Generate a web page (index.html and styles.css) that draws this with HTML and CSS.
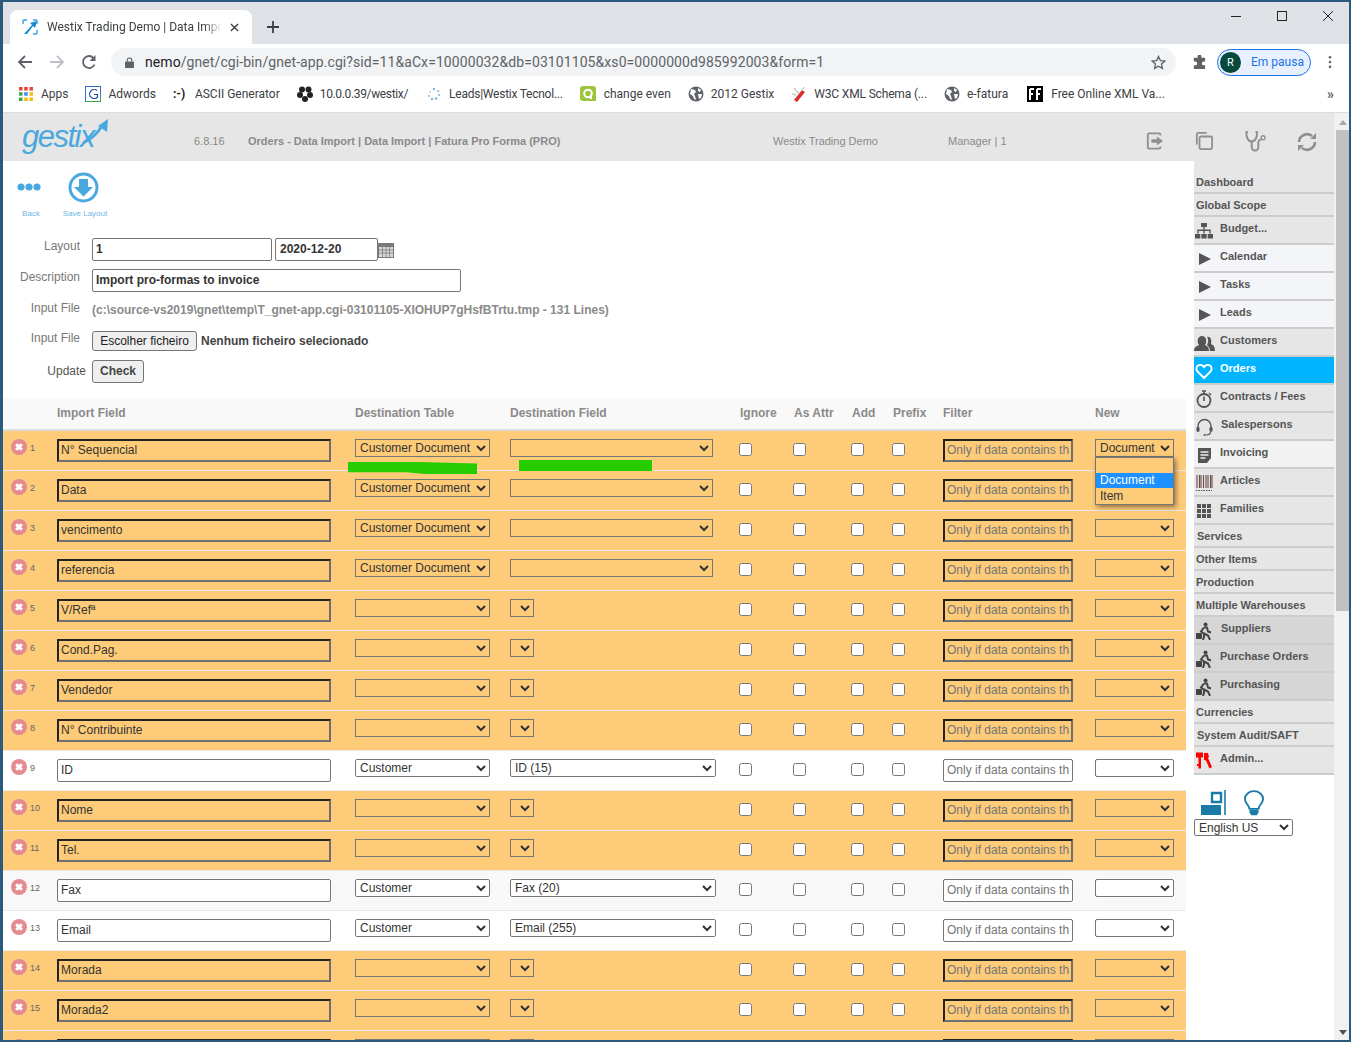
FILE: index.html
```html
<!DOCTYPE html>
<html lang="en">
<head>
<meta charset="utf-8">
<title>Westix Trading Demo | Data Import</title>
<link rel="stylesheet" href="styles.css">
</head>
<body>
<svg class="defs" width="0" height="0" aria-hidden="true">
  <defs>
    <symbol id="i-del" viewBox="0 0 16 16"><circle cx="8" cy="8" r="8" fill="#e58b90"/><path d="M5.200 5.200l5.600 5.600M10.800 5.200l-5.600 5.600" stroke="#fff" stroke-width="3"/></symbol>
    <symbol id="i-globe" viewBox="0 0 16 16"><circle cx="8" cy="8" r="7.500" fill="#5f6368"/><path d="M3 3l4 1 1 2-2 2 1 2 1 4-2-1-1-3-3-2zM10 2l3 2-1 2-2-1zM10 8l4 0-1 4-2 1z" fill="#fff"/></symbol>
    <symbol id="i-play" viewBox="0 0 18 18"><path d="M4 3l12 6-12 6z" fill="#555"/></symbol>
    <symbol id="i-walker" viewBox="0 0 18 18"><circle cx="10.500" cy="2.500" r="2" fill="#444"/><path d="M9 5.500l3 0 1 4 3 1M9 5.500l-3 4 3 2 0 3-1 3.500M9 11.500l4 2 2 4.500" stroke="#444" stroke-width="2" fill="none"/><rect x="1" y="11" width="6" height="6" rx="1" fill="#444"/></symbol>
  </defs>
</svg>
<div class="window">
  <div class="tabstrip">
    <div class="tab">
      <svg class="favicon" viewBox="0 0 16 16"><path d="M1 5V2a1 1 0 0 1 1-1h3M11 1h3a1 1 0 0 1 1 1v3M15 11v3a1 1 0 0 1-1 1h-3" stroke="#35a4e0" stroke-width="1.400" fill="none"/><path d="M2 15L10 6 8 4 15 2 13 9 11 7 5 15z" fill="#1a8ad6"/></svg>
      <span class="tab-title">Westix Trading Demo | Data Import</span>
      <svg class="tab-close" viewBox="0 0 10 10"><path d="M1 1l8 8M9 1L1 9" stroke="#3c4043" stroke-width="1.500"/></svg>
    </div>
    <svg class="newtab" viewBox="0 0 12 12"><path d="M6 0v12M0 6h12" stroke="#3c4043" stroke-width="1.800"/></svg>
    <div class="winctl">
      <svg viewBox="0 0 10 10" class="wc"><path d="M0 5.500h10" stroke="#222" stroke-width="1"/></svg>
      <svg viewBox="0 0 10 10" class="wc"><rect x=".5" y=".5" width="9" height="9" fill="none" stroke="#222"/></svg>
      <svg viewBox="0 0 10 10" class="wc"><path d="M0 0l10 10M10 0L0 10" stroke="#222" stroke-width="1"/></svg>
    </div>
  </div>
  <div class="toolbar">
    <svg class="nav" viewBox="0 0 16 16"><path d="M15 8H2M8 2L2 8l6 6" stroke="#5f6368" stroke-width="1.800" fill="none"/></svg>
    <svg class="nav" viewBox="0 0 16 16"><path d="M1 8h13M8 2l6 6-6 6" stroke="#bdc1c6" stroke-width="1.800" fill="none"/></svg>
    <svg class="nav" viewBox="0 0 16 16"><path d="M13.500 10.500A6 6 0 1 1 12.500 4" stroke="#5f6368" stroke-width="1.800" fill="none"/><path d="M14.500 1v6h-6z" fill="#5f6368"/></svg>
    <div class="omnibox">
      <svg class="lock" viewBox="0 0 10 12"><rect y="5" width="10" height="7" rx="1" fill="#5f6368"/><path d="M2.500 5V3.500a2.500 2.500 0 0 1 5 0V5" stroke="#5f6368" stroke-width="1.300" fill="none"/></svg>
      <span class="url"><b class="host">nemo</b>/gnet/cgi-bin/gnet-app.cgi?sid=11&amp;aCx=10000032&amp;db=03101105&amp;xs0=0000000d985992003&amp;form=1</span>
      <svg class="star" viewBox="0 0 16 16"><path d="M8 1.500l2 4.400 4.800.5-3.600 3.200 1 4.700L8 11.900l-4.200 2.400 1-4.700L1.200 6.400 6 5.900z" stroke="#5f6368" stroke-width="1.400" fill="none"/></svg>
    </div>
    <svg class="puzzle" viewBox="0 0 16 16"><path d="M6 1.500a2 2 0 0 1 4 0V3h4v4h-1.500a2 2 0 0 0 0 4H14v4H2v-4h1.500a2 2 0 0 0 0-4H2V3h4z" fill="#5f6368"/></svg>
    <div class="profile"><span class="avatar">R</span><span class="paused">Em pausa</span></div>
    <svg class="kebab" viewBox="0 0 4 16"><circle cx="2" cy="2.500" r="1.500" fill="#5f6368"/><circle cx="2" cy="8" r="1.500" fill="#5f6368"/><circle cx="2" cy="13.500" r="1.500" fill="#5f6368"/></svg>
  </div>
  <div class="bookmarks">
    <span class="bm"><svg class="bmi" viewBox="0 0 16 16"><g><rect x="1" y="1" width="3.500" height="3.500" fill="#ea4335"/><rect x="6.200" y="1" width="3.500" height="3.500" fill="#ea4335"/><rect x="11.500" y="1" width="3.500" height="3.500" fill="#ea4335"/><rect x="1" y="6.200" width="3.500" height="3.500" fill="#34a853"/><rect x="6.200" y="6.200" width="3.500" height="3.500" fill="#4285f4"/><rect x="11.500" y="6.200" width="3.500" height="3.500" fill="#fbbc04"/><rect x="1" y="11.500" width="3.500" height="3.500" fill="#34a853"/><rect x="6.200" y="11.500" width="3.500" height="3.500" fill="#fbbc04"/><rect x="11.500" y="11.500" width="3.500" height="3.500" fill="#fbbc04"/></g></svg>Apps</span>
    <span class="bm bm-ad"><svg class="bmi" viewBox="0 0 16 16"><rect x=".5" y=".5" width="15" height="15" fill="#fff" stroke="#2f6fbf"/><path d="M.5 15.500h15V8" stroke="#34a853" fill="none"/><path d="M12 4.500A4.500 4.500 0 1 0 12.500 11V8.500H9" stroke="#1a3fa8" stroke-width="1.200" fill="none"/></svg>Adwords</span>
    <span class="bm"><span class="smile">:-)</span>ASCII Generator</span>
    <span class="bm bm-t1"><svg class="bmi" viewBox="0 0 16 16"><g fill="#222"><circle cx="5" cy="3.500" r="3"/><circle cx="11.500" cy="3.500" r="3"/><circle cx="3" cy="9" r="3"/><circle cx="13" cy="9" r="3"/><circle cx="8" cy="13" r="3"/></g></svg>10.0.0.39/westix/</span>
    <span class="bm bm-t2"><svg class="bmi" viewBox="0 0 16 16"><g fill="#7fb4dc"><circle cx="8" cy="3" r="1.200"/><circle cx="12" cy="5" r="1"/><circle cx="13" cy="9" r="1"/><circle cx="10" cy="12.500" r="1.200"/><circle cx="6" cy="13" r="1.200"/><circle cx="3" cy="10" r="1"/><circle cx="4" cy="6" r=".8"/></g></svg>Leads|Westix Tecnol...</span>
    <span class="bm bm-ce"><svg class="bmi" viewBox="0 0 16 16"><path d="M3 0h10a3 3 0 0 1 3 3v12H3a3 3 0 0 1-3-3V3a3 3 0 0 1 3-3z" fill="#9dc53c"/><circle cx="8" cy="7.500" r="3.800" fill="none" stroke="#fff" stroke-width="2"/><path d="M11 8v5" stroke="#fff" stroke-width="2"/></svg>change even</span>
    <span class="bm"><svg class="bmi"><use href="#i-globe"/></svg>2012 Gestix</span>
    <span class="bm bm-t3"><svg class="bmi" viewBox="0 0 16 16"><path d="M3 14l8-10 3 2-8 10z" fill="#d92b2b"/><path d="M3 2l5 6M13 1l-2 4M1 8l4 1" stroke="#c8c8c8" stroke-width="1.400"/></svg>W3C XML Schema (...</span>
    <span class="bm"><svg class="bmi"><use href="#i-globe"/></svg>e-fatura</span>
    <span class="bm bm-ff"><svg class="bmi" viewBox="0 0 16 16"><rect width="16" height="16" fill="#000"/><path d="M3 3v11M3 3h4M3 8h3M10 3v11M10 3h4M10 8h3" stroke="#fff" stroke-width="2" fill="none"/></svg>Free Online XML Va...</span>
    <span class="bm-more">»</span>
  </div>
  <div class="page">
    <div class="app">
      <header class="appbar">
        <div class="logo">gestix<svg class="logo-arrow" viewBox="0 0 28 28"><path d="M1 25C8 22 15 16 20 8" stroke="#4aa8e0" stroke-width="2.600" fill="none"/><path d="M26 1l-1 13-9-6z" fill="#4aa8e0"/></svg></div>
        <span class="ver">6.8.16</span>
        <span class="crumb">Orders - Data Import | Data Import | Fatura Pro Forma (PRO)</span>
        <span class="company">Westix Trading Demo</span>
        <span class="user">Manager | 1</span>
        <div class="app-icons">
          <svg class="ai" viewBox="0 0 20 20"><path d="M16 4V3a1.500 1.500 0 0 0-1.500-1.500h-11A1.500 1.500 0 0 0 2 3v14a1.500 1.500 0 0 0 1.500 1.500h11A1.500 1.500 0 0 0 16 17v-1" stroke="#8f8f8f" stroke-width="2" fill="none"/><path d="M6 8h6V5l7 5-7 5v-3H6z" fill="#8f8f8f"/></svg>
          <svg class="ai ai-c" viewBox="0 0 20 20"><path d="M2 14V3a2 2 0 0 1 2-2h9" stroke="#8f8f8f" stroke-width="2" fill="none"/><rect x="5" y="5" width="14" height="14" rx="2" stroke="#8f8f8f" stroke-width="2" fill="none"/></svg>
          <svg class="ai ai-s" viewBox="0 0 22 22"><path d="M3 1H1.500C1 6 3 11 7 11s6-5 5.500-10H11M7 11v6a3.500 3.500 0 0 0 7 0v-5a3 3 0 0 1 3-3" stroke="#8f8f8f" stroke-width="2" fill="none"/><circle cx="19" cy="7" r="2" stroke="#8f8f8f" stroke-width="1.400" fill="none"/></svg>
          <svg class="ai ai-r" viewBox="0 0 20 20"><path d="M2 10a8 8 0 0 1 13-6M18 10a8 8 0 0 1-13 6" stroke="#8f8f8f" stroke-width="2.600" fill="none"/><path d="M13 7h6V1zM1 13h6l-6 6z" fill="#8f8f8f"/></svg>
        </div>
      </header>
      <div class="body">
        <main class="main">
          <div class="tools">
            <a class="tool tool-back"><svg class="tool-ic" viewBox="0 0 24 31"><circle cx="4" cy="15" r="3.600" fill="#4aa8e0"/><circle cx="12" cy="15" r="3.600" fill="#4aa8e0"/><circle cx="20" cy="15" r="3.600" fill="#4aa8e0"/></svg><span>Back</span></a>
            <a class="tool tool-save"><svg class="tool-ic" viewBox="0 0 31 31"><circle cx="15.500" cy="15.500" r="13.500" stroke="#4aa8e0" stroke-width="3" fill="none"/><path d="M11 7h9v8h5l-9.500 9.500L6 15h5z" fill="#4aa8e0"/></svg><span>Save Layout</span></a>
          </div>
          <form class="form">
            <div class="frow frow-1"><label class="flabel">Layout</label><input class="fin fin-code" value="1"><input class="fin fin-date" value="2020-12-20"><svg class="cal" viewBox="0 0 16 16"><rect x="0" y="1" width="16" height="15" fill="#7a7a7a"/><rect x="1" y="5" width="14" height="10" fill="#d8d8d8"/><path d="M1 8h14M1 11h14M4.500 5v10M8 5v10M11.500 5v10" stroke="#7a7a7a" stroke-width=".8"/></svg></div>
            <div class="frow frow-2"><label class="flabel">Description</label><input class="fin fin-desc" value="Import pro-formas to invoice"></div>
            <div class="frow frow-3"><label class="flabel">Input File</label><span class="path">(c:\source-vs2019\gnet\temp\T_gnet-app.cgi-03101105-XIOHUP7gHsfBTrtu.tmp - 131 Lines)</span></div>
            <div class="frow frow-4"><label class="flabel">Input File</label><button type="button" class="btn btn-file">Escolher ficheiro</button><span class="nofile">Nenhum ficheiro selecionado</span></div>
            <div class="frow frow-5"><label class="flabel flabel-wide">Update</label><button type="button" class="btn btn-check">Check</button></div>
          </form>
          <div class="table">
            <div class="thead">
              <span></span><span>Import Field</span><span>Destination Table</span><span>Destination Field</span><span class="th-c">Ignore</span><span class="th-c">As Attr</span><span class="th-c">Add</span><span class="th-c">Prefix</span><span>Filter</span><span>New</span>
            </div>
            <div class="green green-a"></div>
            <div class="green green-b"></div>

            <div class="row warn">
              <div class="idx"><svg class="del"><use href="#i-del"/></svg><span>1</span></div>
              <div><input class="in-field" value="N° Sequencial"></div>
              <div><select class="s-table"><option>Customer Document</option></select></div>
              <div><select class="s-field"><option></option></select></div>
              <div><input type="checkbox"></div><div><input type="checkbox"></div><div><input type="checkbox"></div><div><input type="checkbox"></div>
              <div><input class="in-filter" placeholder="Only if data contains the value"></div>
              <div class="newcell"><select class="s-new"><option>Document</option></select>
                <div class="popup"><div class="opt">&nbsp;</div><div class="opt opt-on">Document</div><div class="opt">Item</div></div>
              </div>
            </div>
            <div class="row warn">
              <div class="idx"><svg class="del"><use href="#i-del"/></svg><span>2</span></div>
              <div><input class="in-field" value="Data"></div>
              <div><select class="s-table"><option>Customer Document</option></select></div>
              <div><select class="s-field"><option></option></select></div>
              <div><input type="checkbox"></div><div><input type="checkbox"></div><div><input type="checkbox"></div><div><input type="checkbox"></div>
              <div><input class="in-filter" placeholder="Only if data contains the value"></div>
              <div><select class="s-new"><option></option></select></div>
            </div>
            <div class="row warn">
              <div class="idx"><svg class="del"><use href="#i-del"/></svg><span>3</span></div>
              <div><input class="in-field" value="vencimento"></div>
              <div><select class="s-table"><option>Customer Document</option></select></div>
              <div><select class="s-field"><option></option></select></div>
              <div><input type="checkbox"></div><div><input type="checkbox"></div><div><input type="checkbox"></div><div><input type="checkbox"></div>
              <div><input class="in-filter" placeholder="Only if data contains the value"></div>
              <div><select class="s-new"><option></option></select></div>
            </div>
            <div class="row warn">
              <div class="idx"><svg class="del"><use href="#i-del"/></svg><span>4</span></div>
              <div><input class="in-field" value="referencia"></div>
              <div><select class="s-table"><option>Customer Document</option></select></div>
              <div><select class="s-field"><option></option></select></div>
              <div><input type="checkbox"></div><div><input type="checkbox"></div><div><input type="checkbox"></div><div><input type="checkbox"></div>
              <div><input class="in-filter" placeholder="Only if data contains the value"></div>
              <div><select class="s-new"><option></option></select></div>
            </div>
            <div class="row warn">
              <div class="idx"><svg class="del"><use href="#i-del"/></svg><span>5</span></div>
              <div><input class="in-field" value="V/Refª"></div>
              <div><select class="s-table"><option></option></select></div>
              <div><select class="s-small"><option></option></select></div>
              <div><input type="checkbox"></div><div><input type="checkbox"></div><div><input type="checkbox"></div><div><input type="checkbox"></div>
              <div><input class="in-filter" placeholder="Only if data contains the value"></div>
              <div><select class="s-new"><option></option></select></div>
            </div>
            <div class="row warn">
              <div class="idx"><svg class="del"><use href="#i-del"/></svg><span>6</span></div>
              <div><input class="in-field" value="Cond.Pag."></div>
              <div><select class="s-table"><option></option></select></div>
              <div><select class="s-small"><option></option></select></div>
              <div><input type="checkbox"></div><div><input type="checkbox"></div><div><input type="checkbox"></div><div><input type="checkbox"></div>
              <div><input class="in-filter" placeholder="Only if data contains the value"></div>
              <div><select class="s-new"><option></option></select></div>
            </div>
            <div class="row warn">
              <div class="idx"><svg class="del"><use href="#i-del"/></svg><span>7</span></div>
              <div><input class="in-field" value="Vendedor"></div>
              <div><select class="s-table"><option></option></select></div>
              <div><select class="s-small"><option></option></select></div>
              <div><input type="checkbox"></div><div><input type="checkbox"></div><div><input type="checkbox"></div><div><input type="checkbox"></div>
              <div><input class="in-filter" placeholder="Only if data contains the value"></div>
              <div><select class="s-new"><option></option></select></div>
            </div>
            <div class="row warn">
              <div class="idx"><svg class="del"><use href="#i-del"/></svg><span>8</span></div>
              <div><input class="in-field" value="N° Contribuinte"></div>
              <div><select class="s-table"><option></option></select></div>
              <div><select class="s-small"><option></option></select></div>
              <div><input type="checkbox"></div><div><input type="checkbox"></div><div><input type="checkbox"></div><div><input type="checkbox"></div>
              <div><input class="in-filter" placeholder="Only if data contains the value"></div>
              <div><select class="s-new"><option></option></select></div>
            </div>
            <div class="row ok">
              <div class="idx"><svg class="del"><use href="#i-del"/></svg><span>9</span></div>
              <div><input class="in-field" value="ID"></div>
              <div><select class="s-table"><option>Customer</option></select></div>
              <div><select class="s-field"><option>ID (15)</option></select></div>
              <div><input type="checkbox"></div><div><input type="checkbox"></div><div><input type="checkbox"></div><div><input type="checkbox"></div>
              <div><input class="in-filter" placeholder="Only if data contains the value"></div>
              <div><select class="s-new"><option></option></select></div>
            </div>
            <div class="row warn">
              <div class="idx"><svg class="del"><use href="#i-del"/></svg><span>10</span></div>
              <div><input class="in-field" value="Nome"></div>
              <div><select class="s-table"><option></option></select></div>
              <div><select class="s-small"><option></option></select></div>
              <div><input type="checkbox"></div><div><input type="checkbox"></div><div><input type="checkbox"></div><div><input type="checkbox"></div>
              <div><input class="in-filter" placeholder="Only if data contains the value"></div>
              <div><select class="s-new"><option></option></select></div>
            </div>
            <div class="row warn">
              <div class="idx"><svg class="del"><use href="#i-del"/></svg><span>11</span></div>
              <div><input class="in-field" value="Tel."></div>
              <div><select class="s-table"><option></option></select></div>
              <div><select class="s-small"><option></option></select></div>
              <div><input type="checkbox"></div><div><input type="checkbox"></div><div><input type="checkbox"></div><div><input type="checkbox"></div>
              <div><input class="in-filter" placeholder="Only if data contains the value"></div>
              <div><select class="s-new"><option></option></select></div>
            </div>
            <div class="row ok ok-alt">
              <div class="idx"><svg class="del"><use href="#i-del"/></svg><span>12</span></div>
              <div><input class="in-field" value="Fax"></div>
              <div><select class="s-table"><option>Customer</option></select></div>
              <div><select class="s-field"><option>Fax (20)</option></select></div>
              <div><input type="checkbox"></div><div><input type="checkbox"></div><div><input type="checkbox"></div><div><input type="checkbox"></div>
              <div><input class="in-filter" placeholder="Only if data contains the value"></div>
              <div><select class="s-new"><option></option></select></div>
            </div>
            <div class="row ok">
              <div class="idx"><svg class="del"><use href="#i-del"/></svg><span>13</span></div>
              <div><input class="in-field" value="Email"></div>
              <div><select class="s-table"><option>Customer</option></select></div>
              <div><select class="s-field"><option>Email (255)</option></select></div>
              <div><input type="checkbox"></div><div><input type="checkbox"></div><div><input type="checkbox"></div><div><input type="checkbox"></div>
              <div><input class="in-filter" placeholder="Only if data contains the value"></div>
              <div><select class="s-new"><option></option></select></div>
            </div>
            <div class="row warn">
              <div class="idx"><svg class="del"><use href="#i-del"/></svg><span>14</span></div>
              <div><input class="in-field" value="Morada"></div>
              <div><select class="s-table"><option></option></select></div>
              <div><select class="s-small"><option></option></select></div>
              <div><input type="checkbox"></div><div><input type="checkbox"></div><div><input type="checkbox"></div><div><input type="checkbox"></div>
              <div><input class="in-filter" placeholder="Only if data contains the value"></div>
              <div><select class="s-new"><option></option></select></div>
            </div>
            <div class="row warn">
              <div class="idx"><svg class="del"><use href="#i-del"/></svg><span>15</span></div>
              <div><input class="in-field" value="Morada2"></div>
              <div><select class="s-table"><option></option></select></div>
              <div><select class="s-small"><option></option></select></div>
              <div><input type="checkbox"></div><div><input type="checkbox"></div><div><input type="checkbox"></div><div><input type="checkbox"></div>
              <div><input class="in-filter" placeholder="Only if data contains the value"></div>
              <div><select class="s-new"><option></option></select></div>
            </div>
            <div class="row warn">
              <div class="idx"><svg class="del"><use href="#i-del"/></svg></div>
              <div><input class="in-field" value=""></div>
              <div><select class="s-table"><option></option></select></div>
              <div><select class="s-small"><option></option></select></div>
              <div><input type="checkbox"></div><div><input type="checkbox"></div><div><input type="checkbox"></div><div><input type="checkbox"></div>
              <div><input class="in-filter"></div>
              <div><select class="s-new"><option></option></select></div>
            </div>
          </div>
        </main>
        <aside class="side">
          <nav class="menu">
            <a class="mi mi-first">Dashboard</a>
            <a class="mi">Global Scope</a>
            <a class="mi mi-ic"><svg class="mic" viewBox="0 0 18 18"><path d="M6 1h6v4H6zM8.300 5h1.400v3h-1.400zM2.300 7.500h13.400v4h-1.400V9H9.700v2.500H8.300V9H3.700v2.500H2.300zM0 12h5.300v4.500H0zM6.300 12h5.400v4.500H6.300zM12.700 12H18v4.500h-5.300z" fill="#555"/></svg>Budget...</a>
            <a class="mi mi-ic mi-light"><svg class="mic"><use href="#i-play"/></svg>Calendar</a>
            <a class="mi mi-ic mi-light"><svg class="mic"><use href="#i-play"/></svg>Tasks</a>
            <a class="mi mi-ic mi-light"><svg class="mic"><use href="#i-play"/></svg>Leads</a>
            <a class="mi mi-ic"><svg class="mic mic-w" viewBox="0 0 22 18"><path d="M1 17c0-4 3-5 5-6-2-2-2-9 3-9s5 7 3 9c2 1 4 2 4 6z" fill="#555"/><path d="M14 3c4-1 5 4 4 7 2 1 4 2 4 7h-5c0-3-2-5-3-6 1-2 2-5 0-8z" fill="#555"/></svg>Customers</a>
            <a class="mi mi-ic mi-on"><svg class="mic" viewBox="0 0 18 18"><path d="M9 16L2.500 9.500a4 4 0 0 1 0-5.500 4 4 0 0 1 5.500 0L9 5l1-1a4 4 0 0 1 5.500 0 4 4 0 0 1 0 5.500z" stroke="#fff" stroke-width="2" fill="none"/></svg>Orders</a>
            <a class="mi mi-ic"><svg class="mic" viewBox="0 0 18 18"><circle cx="9" cy="10.500" r="6.500" stroke="#555" stroke-width="1.800" fill="none"/><path d="M7 1h4M9 1v3M9 6.500v4.500" stroke="#555" stroke-width="1.600"/><path d="M14 3l2 2" stroke="#555" stroke-width="1.500"/></svg>Contracts / Fees</a>
            <a class="mi mi-ic mi-nudge"><svg class="mic" viewBox="0 0 18 18"><path d="M3 11V8a6.500 6.500 0 0 1 13 0v3" stroke="#555" stroke-width="1.400" fill="none"/><rect x="1.500" y="9" width="3" height="5" rx="1.400" fill="#555"/><rect x="14.500" y="9" width="3" height="5" rx="1.400" fill="#555"/><path d="M15.500 14c0 2-2 3-5 3" stroke="#555" stroke-width="1.200" fill="none"/><circle cx="9.500" cy="17" r="1" fill="#555"/></svg>Salespersons</a>
            <a class="mi mi-ic mi-soft"><svg class="mic" viewBox="0 0 18 18"><path d="M3 2h13v10l-4 5H3z" fill="#555"/><path d="M5.500 6h8M5.500 9h8M5.500 12h5" stroke="#eee" stroke-width="1.300"/></svg>Invoicing</a>
            <a class="mi mi-ic"><svg class="mic" viewBox="0 0 18 18"><path d="M2 1v13M4.500 1v13M6 1v13M8.500 1v13M11 1v13M13 1v13M15.500 1v13M17 1v13" stroke="#6b4a4a" stroke-width="1.100"/><path d="M1 16.500h16" stroke="#6b4a4a" stroke-width="1" stroke-dasharray="1.500 1"/></svg>Articles</a>
            <a class="mi mi-ic"><svg class="mic" viewBox="0 0 18 18"><path d="M2 2h4v4H2zM7 2h4v4H7zM12 2h4v4h-4zM2 7h4v4H2zM7 7h4v4H7zM12 7h4v4h-4zM2 12h4v4H2zM7 12h4v4H7zM12 12h4v4h-4z" fill="#555"/></svg>Families</a>
            <a class="mi mi-nudge">Services</a>
            <a class="mi">Other Items</a>
            <a class="mi">Production</a>
            <a class="mi">Multiple Warehouses</a>
            <a class="mi mi-ic mi-dark mi-nudge"><svg class="mic"><use href="#i-walker"/></svg>Suppliers</a>
            <a class="mi mi-ic mi-dark"><svg class="mic"><use href="#i-walker"/></svg>Purchase Orders</a>
            <a class="mi mi-ic mi-dark"><svg class="mic"><use href="#i-walker"/></svg>Purchasing</a>
            <a class="mi">Currencies</a>
            <a class="mi mi-nudge">System Audit/SAFT</a>
            <a class="mi mi-ic"><svg class="mic" viewBox="0 0 18 18"><path d="M1 .5h7v5H6v11H3.500V14H2v-2h1.500V5.500H1zM9 1h4l1 4-1 1 4 9-2.500 1.500-3.500-8-2-.5z" fill="#f00"/></svg>Admin...</a>
          </nav>
          <div class="side-ic">
            <svg class="si si-a" viewBox="0 0 25 25"><path d="M0 15h20v10H0z" fill="#1a7aa8"/><path d="M11 3h9v9h-9z" fill="none" stroke="#1a7aa8" stroke-width="2.400"/><path d="M24 0v25" stroke="#1a7aa8" stroke-width="1.600"/></svg>
            <svg class="si si-b" viewBox="0 0 22 27"><path d="M6 20c0-4-5-6-5-11a10 8.500 0 0 1 20 0c0 5-5 7-5 11z" fill="none" stroke="#1a7aa8" stroke-width="2"/><path d="M6 21h10v3l-2 3H8l-2-3z" fill="#1a7aa8"/></svg>
          </div>
          <select class="lang"><option>English US</option></select>
        </aside>
      </div>
    </div>
    <div class="scrollbar">
      <svg class="sb-a" viewBox="0 0 8 5"><path d="M4 0l4 5H0z" fill="#a8a8a8"/></svg>
      <div class="sb-thumb"></div>
      <svg class="sb-b" viewBox="0 0 8 5"><path d="M0 0h8L4 5z" fill="#505050"/></svg>
    </div>
  </div>
</div>
</body>
</html>
```

FILE: styles.css
```css
* { box-sizing: border-box; }
html, body { margin: 0; padding: 0; height: 100%; overflow: hidden; background: #fff; }
body { font-family: "Liberation Sans", Arial, sans-serif; font-size: 12px; color: #333; }
.defs { position: absolute; }

.window { width: 1351px; height: 1042px; border-style: solid; border-color: #2b5a7c; border-width: 2px 2px 2px 3px; display: flex; flex-direction: column; overflow: hidden; }

/* browser chrome */
.tabstrip { height: 42px; flex: none; background: #dee1e6; display: flex; align-items: flex-start; padding: 8px 0 0 7px; font-family: Roboto, sans-serif; }
.tab { width: 242px; height: 34px; background: #fff; border-radius: 8px 8px 0 0; display: flex; align-items: center; padding: 0 10px 0 12px; }
.favicon { width: 16px; height: 16px; flex: none; margin-right: 9px; }
.tab-title { flex: none; width: 175px; white-space: nowrap; overflow: hidden; font-size: 12px; color: #3c4043; -webkit-mask-image: linear-gradient(to right, #000 90%, transparent); mask-image: linear-gradient(to right, #000 90%, transparent); }
.tab-close { width: 9px; height: 9px; flex: none; margin-left: 8px; }
.newtab { width: 12px; height: 12px; flex: none; margin: 11px 0 0 15px; }
.winctl { margin-left: auto; display: flex; gap: 36px; padding: 0 16px 0 0; margin-top: 1px; }
.wc { width: 10px; height: 10px; display: block; }

.toolbar { height: 32px; flex: none; background: #fff; display: flex; align-items: center; padding: 4px 0 0 14px; font-family: Roboto, sans-serif; }
.nav { width: 16px; height: 16px; flex: none; margin-right: 16px; }
.omnibox { width: 1065px; height: 28px; margin-left: -2px; background: #f1f3f4; border-radius: 14px; display: flex; align-items: center; padding: 0 10px 0 14px; flex: none; }
.lock { width: 9px; height: 11px; flex: none; margin-right: 11px; }
.url { flex: 1; font-size: 14px; color: #5f6368; white-space: nowrap; overflow: hidden; letter-spacing: .08px; }
.host { font-weight: 400; color: #202124; }
.star { width: 15px; height: 15px; flex: none; }
.puzzle { width: 15px; height: 15px; flex: none; margin-left: 16px; }
.profile { width: 94px; height: 27px; margin-left: 10px; border: 1px solid #1a73e8; border-radius: 14px; background: #e8f0fe; display: flex; align-items: center; padding-left: 2px; flex: none; }
.avatar { width: 21px; height: 21px; border-radius: 50%; background: #07493d; color: #fff; font-size: 11px; display: flex; align-items: center; justify-content: center; }
.paused { margin-left: 10px; font-size: 12px; color: #1a73e8; }
.kebab { width: 4px; height: 14px; flex: none; margin-left: 17px; }

.bookmarks { height: 37px; flex: none; background: #fff; border-bottom: 1px solid #dadce0; display: flex; align-items: center; gap: 17px; padding: 0 0 0 15px; font-family: Roboto, sans-serif; font-size: 12px; color: #3c4043; position: relative; }
.bm { display: flex; align-items: center; gap: 7px; white-space: nowrap; }
.bm-ad { margin-left: -1px; gap: 8px; }
.bm-t1 { letter-spacing: -.35px; }
.bm-t2 { letter-spacing: -.24px; margin-left: 1px; }
.bm-t3 { letter-spacing: -.16px; }
.bm-ce { gap: 8px; }
.bm-ff { margin-left: 2px; gap: 8px; }
.bmi { width: 16px; height: 16px; flex: none; }
.smile { width: 15px; font-weight: 700; color: #222; font-size: 12px; flex: none; }
.bm-more { margin-left: auto; margin-right: 15px; font-size: 14px; color: #5f6368; font-weight: 700; }

/* page */
.page { flex: 1; min-height: 0; display: flex; }
.app { flex: 1; min-width: 0; display: flex; flex-direction: column; }
.scrollbar { width: 15px; flex: none; background: #f1f1f1; padding-left: 2px; display: flex; flex-direction: column; align-items: center; }
.sb-a { width: 8px; height: 5px; margin: 7px 0 5px; flex: none; }
.sb-thumb { width: 13px; height: 481px; background: #c1c1c1; flex: none; }
.sb-b { width: 8px; height: 5px; margin-top: auto; margin-bottom: 5px; flex: none; }

.appbar { height: 48px; flex: none; background: #e6e6e6; display: flex; align-items: flex-start; color: #8a8a8a; font-size: 11px; }
.appbar > span { padding-top: 22px; white-space: nowrap; }
.logo { position: relative; width: 191px; padding: 5px 0 0 19px; font-size: 31px; line-height: 38px; font-style: italic; color: #4aa8e0; letter-spacing: -1.5px; flex: none; }
.logo-arrow { position: absolute; left: 79px; top: 5px; width: 28px; height: 28px; }
.ver { width: 54px; flex: none; color: #888; }
.crumb { width: 525px; flex: none; font-weight: 700; }
.company { width: 175px; flex: none; }
.user { width: 198px; flex: none; }
.app-icons { display: flex; padding-top: 19px; }
.ai { width: 18px; height: 18px; flex: none; margin-right: 32px; }
.ai-c { margin-left: -1px; margin-right: 32px; }
.ai-s { width: 21px; height: 21px; margin-top: -1px; margin-right: 31px; }
.ai-r { width: 20px; height: 20px; margin-right: 0; }

.body { flex: 1; min-height: 0; display: flex; }
.main { width: 1183px; flex: none; background: #fff; overflow: hidden; }
.side { width: 148px; flex: none; padding-left: 8px; background: #fff; }

.tools { height: 77px; display: flex; align-items: flex-start; padding: 11px 0 0 8px; }
.tool { display: flex; flex-direction: column; align-items: center; font-size: 8px; color: #6fb6e6; line-height: 10px; }
.tool span { margin-top: 6px; white-space: nowrap; }
.tool-ic { height: 31px; display: block; }
.tool-back { width: 40px; }
.tool-back .tool-ic { width: 24px; margin-right: 4px; }
.tool-save { width: 46px; margin-left: 11px; }
.tool-save .tool-ic { width: 31px; margin-right: 4px; }

.form { height: 160px; }
.frow { display: flex; align-items: flex-start; }
.frow-1, .frow-2 { height: 31px; }
.frow-2 { height: 32px; }
.frow-3 { height: 30px; }
.frow-4 { height: 29px; }
.flabel { width: 77px; margin-right: 12px; text-align: right; color: #777; line-height: 16px; flex: none; }
.flabel-wide { width: 83px; margin-right: 6px; color: #555; line-height: 22px; }
.frow-3 .flabel, .frow-4 .flabel { line-height: 14px; }
.fin { height: 23px; border: 1px solid #767676; border-radius: 2px; font: 700 12px "Liberation Sans", Arial, sans-serif; color: #333; padding: 0 3px 2px; background: #fff; }
.fin-code { width: 180px; }
.fin-date { width: 103px; margin-left: 3px; padding-left: 4px; }
.cal { width: 16px; height: 16px; margin: 4px 0 0 0; flex: none; }
.fin-desc { width: 369px; }
.path { font-weight: 700; color: #8a8a8a; line-height: 18px; white-space: nowrap; }
.btn { font: 12px "Liberation Sans", Arial, sans-serif; color: #222; background: #efefef; border: 1px solid #767676; border-radius: 3px; padding: 0; }
.btn-file { width: 105px; height: 20px; }
.nofile { font-weight: 700; color: #444; margin-left: 4px; line-height: 20px; }
.btn-check { width: 52px; height: 23px; font-weight: 700; color: #444; padding-bottom: 2px; }

/* table */
.table { position: relative; }
.thead, .row { display: grid; grid-template-columns: 54px 298px 155px 229px 54px 58px 41px 51px 152px 91px; }
.thead { height: 33px; padding-bottom: 2px; background: #f9f9f9; border-bottom: 2px solid #ddd; align-items: center; font-weight: 700; color: #8a8a8a; }
.th-c { padding-left: 1px; white-space: nowrap; }
.row { height: 40px; padding-top: 8px; align-items: start; border-bottom: 1px solid #e9e9e9; }
.row.warn { background: #fecb78; }
.row.ok { background: #fff; }
.row.ok-alt { background: #f8f8f8; }
.idx { display: flex; align-items: flex-start; padding-left: 8px; gap: 3px; font-size: 9px; color: #666; line-height: 18px; }
.del { width: 16px; height: 16px; flex: none; }
.row input[type="checkbox"] { margin: 4px 0 0 0; display: block; width: 13px; height: 13px; }
.in-field, .in-filter { height: 23px; display: block; font: 12px "Liberation Sans", Arial, sans-serif; color: #333; }
.in-field { width: 274px; }
.in-filter { width: 130px; }
.warn .in-field, .warn .in-filter { border-style: solid; border-width: 2px; border-color: #222 #6f6f6f #6f6f6f #222; background: #fecb78; padding: 0 2px 2px; }
.ok .in-field, .ok .in-filter { border: 1px solid #767676; border-radius: 2px; background: #fff; padding: 0 3px 2px; }
select { font: 12px "Liberation Sans", Arial, sans-serif; color: #333; display: block; height: 18px; padding: 0; border: 1px solid #767676; border-radius: 0; background-color: transparent; }
.ok select { background-color: #fff; border-radius: 2px; }
.s-table { width: 135px; }
.s-field { width: 203px; }
.ok .s-field { width: 206px; }
.s-small { width: 24px; }
.s-new { width: 79px; }
.newcell { position: relative; }
.popup { position: absolute; left: 0; top: 18px; width: 79px; border: 1px solid #767676; background: #fecb78; box-shadow: 2px 2px 5px rgba(0,0,0,.45); font-size: 12px; z-index: 2; color: #333; }
.opt { height: 16px; line-height: 16px; padding-left: 4px; }
.opt:first-child { height: 15px; }
.opt-on { height: 15px; line-height: 15px; background: #1e90ff; color: #fff; }
.green { position: absolute; background: #27cc00; z-index: 1; }
.green-a { left: 345px; top: 64px; width: 129px; height: 12px; clip-path: polygon(0 0, 55% 0, 100% 12%, 100% 100%, 60% 100%, 45% 85%, 0 85%); }
.green-b { left: 516px; top: 62px; width: 133px; height: 11px; }

/* side menu */
.menu { display: flex; flex-direction: column; }
.mi { height: 23px; background: #e6e6e6; border-bottom: 2px solid #ccc; font-weight: 700; font-size: 11px; color: #555; display: flex; align-items: center; padding-left: 2px; white-space: nowrap; }
.mi-first { height: 33px; padding-top: 11px; }
.mi-ic { height: 28px; padding: 0 0 4px 26px; position: relative; }
.mi-nudge { text-indent: 1px; }
.mic { position: absolute; left: 1px; top: 5px; width: 18px; height: 18px; }
.mic-w { width: 22px; left: -1px; }
.mi-light { background: #f4f5f8; }
.mi-soft { background: #f2f2f2; }
.mi-dark { background: #d6d6d6; }
.mi-on { background: #00b4ff; color: #fff; }
.side-ic { display: flex; padding: 15px 0 0 7px; height: 44px; }
.si { flex: none; }
.si-a { width: 25px; height: 25px; }
.si-b { width: 20px; height: 26px; margin-left: 18px; }
.lang { width: 99px; height: 17px; background: #fff; border-radius: 2px; }
```
